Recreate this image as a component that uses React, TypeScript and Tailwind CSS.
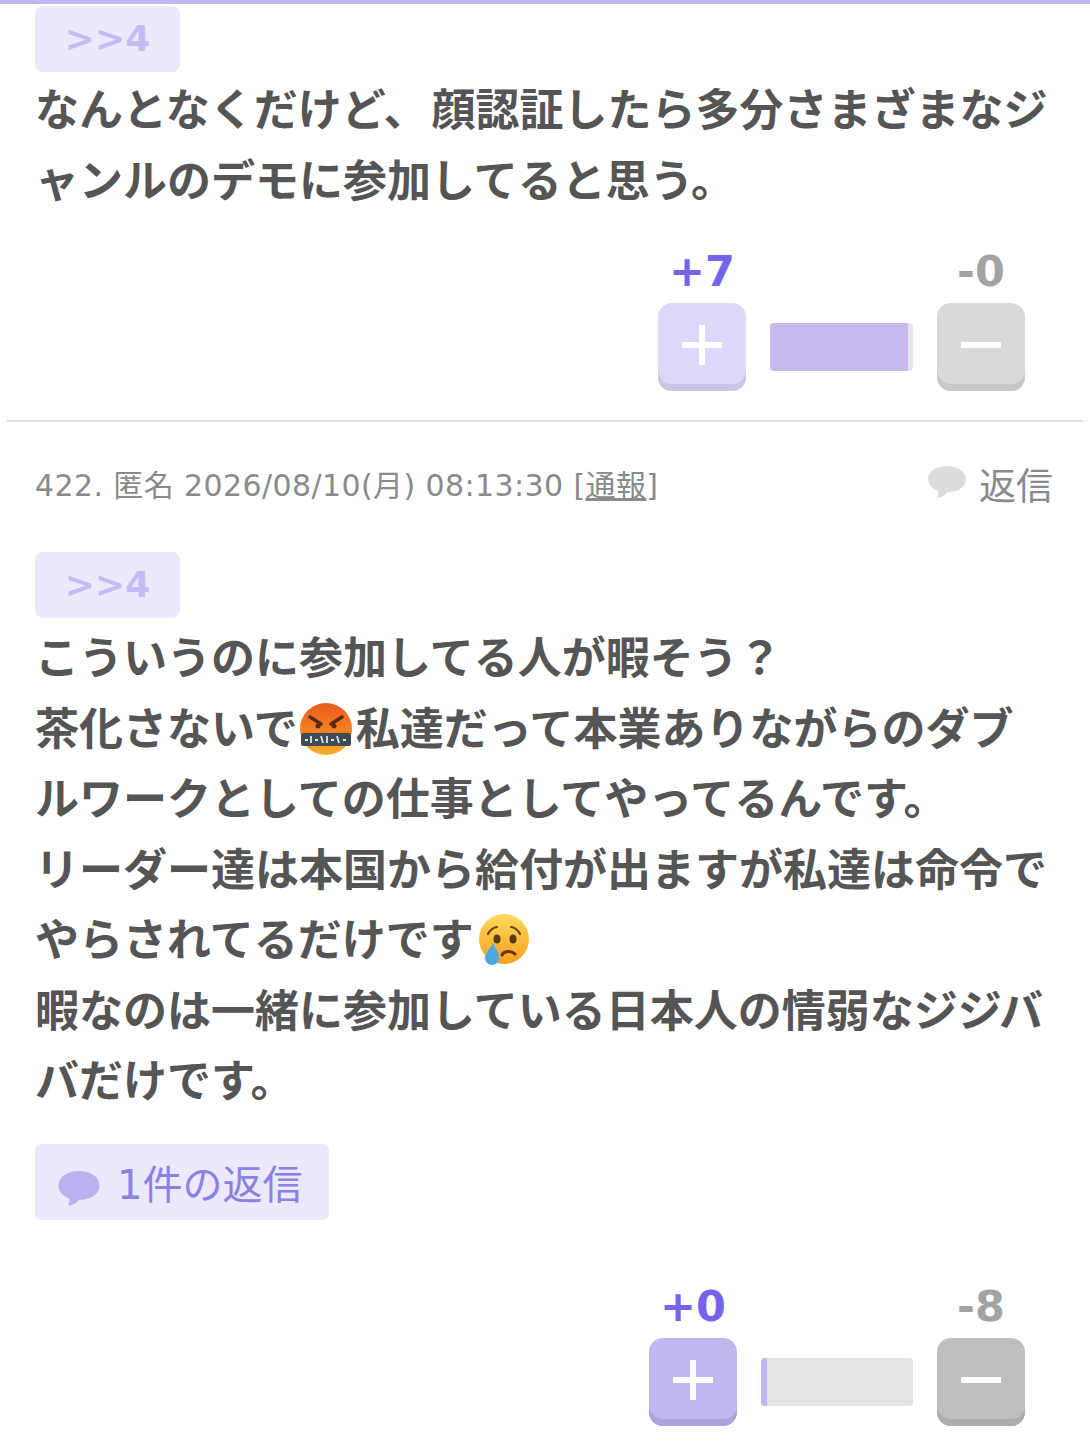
import React from 'react';

const Bubble = ({ className }: { className: string }) => (
  <svg viewBox="0 0 40 36" className={className}>
    <path d="M20 1C9 1 0 6.500 0 15c0 6 4.500 10.500 10.500 12.500 .5 2.500 0 5-1 7.500 4-.5 8-2.500 10.500-6H20c11 0 20-5.500 20-14S31 1 20 1z" fill="currentColor" />
  </svg>
);

const AngryEmoji = () => (
  <svg viewBox="0 0 52 52" className="inline-block w-[52px] h-[52px] align-[-10px] ml-[2px] mr-[4px]">
    <defs>
      <linearGradient id="angry" x1="0" y1="0" x2="0" y2="1">
        <stop offset="0" stopColor="#ea5a22" />
        <stop offset="0.6" stopColor="#f5861f" />
        <stop offset="1" stopColor="#fbb02c" />
      </linearGradient>
    </defs>
    <circle cx="26" cy="26" r="26" fill="url(#angry)" />
    <path d="M10 14l11 7M42 14l-11 7" stroke="#5a2a12" strokeWidth="3.500" strokeLinecap="round" />
    <circle cx="18" cy="23" r="2.500" fill="#5a2a12" />
    <circle cx="34" cy="23" r="2.500" fill="#5a2a12" />
    <rect x="1" y="30" width="50" height="13" rx="2" fill="#3e4c57" />
    <path d="M5 37h3M11 33v7M15 37h3M21 33l2 7M27 33v7M31 37h3M37 33l2 7M43 37h3" stroke="#dce6ec" strokeWidth="1.800" />
  </svg>
);

const CryEmoji = () => (
  <svg viewBox="0 0 52 52" className="inline-block w-[52px] h-[52px] align-[-10px] ml-[4px]">
    <defs>
      <linearGradient id="cry" x1="0" y1="0" x2="0" y2="1">
        <stop offset="0" stopColor="#fdd95c" />
        <stop offset="1" stopColor="#f7a11e" />
      </linearGradient>
    </defs>
    <circle cx="26" cy="25" r="25" fill="url(#cry)" />
    <path d="M10 20c2-4 6-7 9-7M42 20c-2-4-6-7-9-7" stroke="#6b4413" strokeWidth="2.200" fill="none" strokeLinecap="round" />
    <ellipse cx="19" cy="25" rx="3.500" ry="4.500" fill="#5b3a12" />
    <ellipse cx="35" cy="25" rx="3.500" ry="4.500" fill="#5b3a12" />
    <path d="M24 41c2-4 9-5 13-1" stroke="#6b3311" strokeWidth="3" fill="none" strokeLinecap="round" />
    <path d="M15 29c3 6 6 10 6 15a7 7 0 0 1-14 0c0-5 5-9 8-15z" fill="#4fa8e6" />
  </svg>
);

const Badge = () => (
  <div className="w-[145px] h-[66px] rounded-lg bg-[#ece9fc] flex items-center justify-center font-['DejaVu_Sans'] font-bold text-[36px] text-[#c4bbf5]">
    &gt;&gt;4
  </div>
);

type VoteProps = {
  plus: string;
  minus: string;
  plusClass: string;
  minusClass: string;
  barClass: string;
  fillClass: string;
};

const Vote = ({ plus, minus, plusClass, minusClass, barClass, fillClass }: VoteProps) => (
  <div className="flex justify-end pr-[65px]">
    <div className="flex flex-col items-center">
      <div className="h-[36px] leading-[36px] font-['DejaVu_Sans'] font-bold text-[43px] text-[#7563ee]">{plus}</div>
      <div className={`mt-[14px] w-[88px] h-[88px] rounded-[14px] flex items-center justify-center pb-[4px] ${plusClass}`}>
        <svg viewBox="0 0 44 44" className="w-[44px] h-[44px]">
          <path d="M22 2v40M2 22h40" stroke="#fff" strokeWidth="6" />
        </svg>
      </div>
    </div>
    <div className={`ml-[24px] mt-[70px] h-[48px] rounded-[4px] overflow-hidden ${barClass}`}>
      <div className={`h-full ${fillClass}`} />
    </div>
    <div className="ml-[24px] flex flex-col items-center">
      <div className="h-[36px] leading-[36px] font-['DejaVu_Sans'] font-bold text-[43px] text-[#a3a3a3]">{minus}</div>
      <div className={`mt-[14px] w-[88px] h-[88px] rounded-[14px] flex items-center justify-center pb-[4px] ${minusClass}`}>
        <svg viewBox="0 0 44 44" className="w-[44px] h-[44px]">
          <path d="M2 22h40" stroke="#fff" strokeWidth="6" />
        </svg>
      </div>
    </div>
  </div>
);

const App = () => {
  return (
    <div className="w-[1090px] h-[1455px] overflow-hidden bg-white font-['Noto_Sans_CJK_JP',sans-serif] text-[#555]">
      <div className="h-[4px] bg-[#c0b6f2]" />

      <div className="px-[35px] pt-[2px]">
        <Badge />
        <p className="w-[1030px] text-[44px] leading-[70.500px] font-semibold">
          なんとなくだけど<span className="mr-[4px]">、</span>顔認証したら多分さまざまなジャンルのデモに参加してると思う。
        </p>
      </div>

      <div className="mt-[40px]">
        <Vote
          plus="+7"
          minus="-0"
          plusClass="bg-[#dcd8fa] shadow-[inset_0_-7px_0_#cbc6e6]"
          minusClass="bg-[#d9d9d9] shadow-[inset_0_-7px_0_#c8c8c8]"
          barClass="w-[143px] bg-[#e5e5e5]"
          fillClass="w-[138px] bg-[#c7b8ee]"
        />
      </div>

      <div className="mx-[7px] mt-[29px] h-[2px] bg-[#e2e2e2]" />

      <div className="pl-[35px] pr-[37px] pt-[39px] h-[90px] flex items-start justify-between text-[#8a8a8a]">
        <div className="mt-[2px] font-['DejaVu_Sans','Noto_Sans_CJK_JP',sans-serif] text-[30px] tracking-[0.4px] leading-[46px]">
          422. 匿名 2026/08/10(月) 08:13:30 [<span className="underline">通報</span>]
        </div>
        <div className="flex items-center gap-[13px] text-[37px] leading-[46px]">
          <Bubble className="w-[38px] h-[34px] mb-[4px] text-[#dcdcdc]" />
          返信
        </div>
      </div>

      <div className="px-[35px] pt-[40px]">
        <Badge />
        <p className="mt-[2px] text-[44px] leading-[70.500px] font-semibold">
          こういうのに参加してる人が暇そう？
          <br />
          茶化さないで<AngryEmoji />私達だって本業ありながらのダブルワークとしての仕事としてやってるんです。
          <br />
          リーダー達は本国から給付が出ますが私達は命令でやらされてるだけです<CryEmoji />
          <br />
          暇なのは一緒に参加している日本人の情弱なジジババだけです。
        </p>

        <div className="mt-[30px] w-[294px] h-[76px] pt-[7px] rounded-[6px] bg-[#ece9fc] flex items-center pl-[23px] gap-[17px] font-['DejaVu_Sans','Noto_Sans_CJK_JP',sans-serif] text-[40px] text-[#8c7fe6]">
          <Bubble className="w-[42px] h-[37px] mt-[6px] text-[#bdb0ee]" />
          1件の返信
        </div>
      </div>

      <div className="mt-[68px]">
        <Vote
          plus="+0"
          minus="-8"
          plusClass="bg-[#c0b6f2] shadow-[inset_0_-7px_0_#aca2dc]"
          minusClass="bg-[#bfbfbf] shadow-[inset_0_-7px_0_#adadad]"
          barClass="w-[152px] bg-[#e3e3e3]"
          fillClass="w-[6px] bg-[#c0b6f2]"
        />
      </div>
    </div>
  );
};

export default App;
